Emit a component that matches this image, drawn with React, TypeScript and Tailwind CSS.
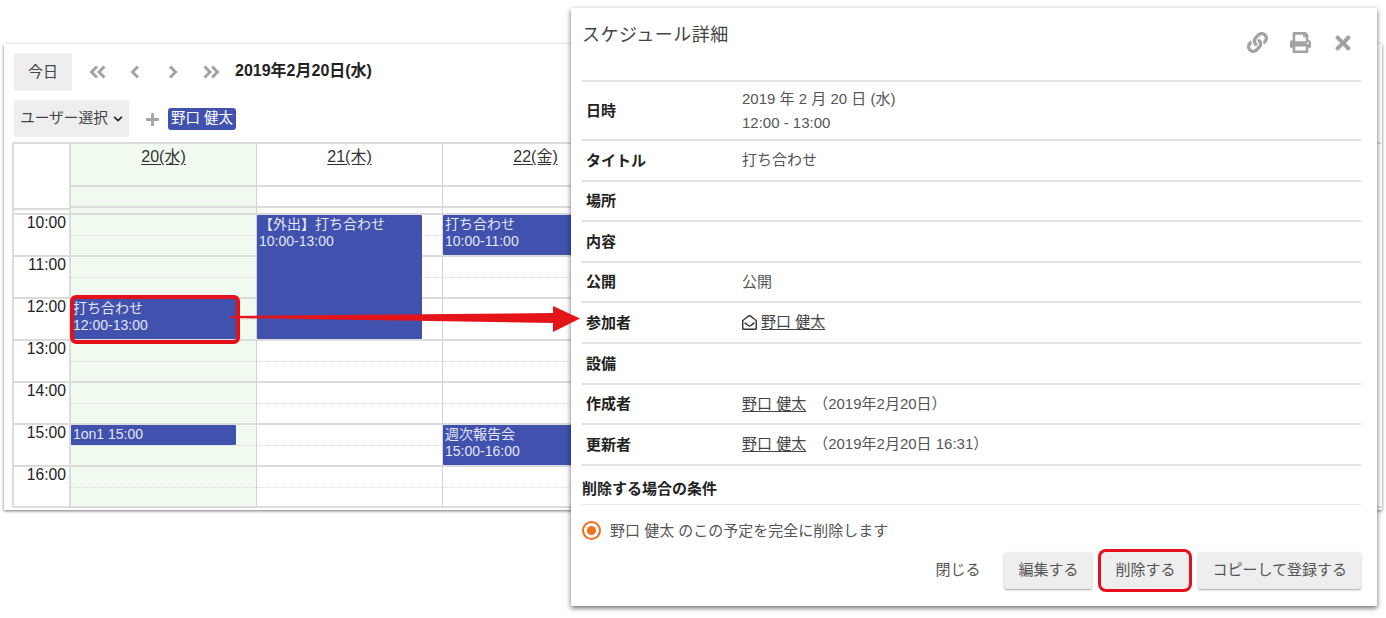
import React from "react";
import { FaLink, FaPrint, FaTimes, FaPlus, FaChevronDown, FaRegEnvelopeOpen } from "react-icons/fa";

const hours = ["10:00", "11:00", "12:00", "13:00", "14:00", "15:00", "16:00"];
const font = "font-['Liberation_Sans','Noto_Sans_CJK_JP',sans-serif]";

type Ev = { top: number; h: number; title?: string; time: string };

function Event({ top, h, title, time }: Ev) {
  return (
    <div
      className="absolute left-0 w-[165px] bg-[#4051ae] text-[#e4e7f5] text-[14px] leading-[17px] pl-[2px] pt-[1px] overflow-hidden rounded-[1px]"
      style={{ top, height: h }}
    >
      {title && <div>{title}</div>}
      <div>{time}</div>
    </div>
  );
}

function Col({ day, today, events }: { day: string; today?: boolean; events: Ev[] }) {
  return (
    <div className={`w-[186px] shrink-0 border-r border-[#d4d4d4] ${today ? "bg-[#f0faee]" : "bg-white"}`}>
      <div className="h-[43px] border-b-2 border-[#dcdcdc] text-center text-[16px] leading-[25px] text-[#333] underline underline-offset-2">
        {day}
      </div>
      <div className="h-[21px] border-b-2 border-[#dcdcdc]" />
      <div className="h-[7px] border-b-2 border-[#dcdcdc]" />
      <div className="relative">
        {hours.map((h, i) => (
          <div key={h} className={`h-[42px] ${i < 6 ? "border-b-2 border-[#dcdcdc]" : ""}`}>
            <div className="h-[21px] border-b border-dotted border-[#d8d8d8]" />
          </div>
        ))}
        {events.map((e, i) => (
          <Event key={i} {...e} />
        ))}
      </div>
    </div>
  );
}

function Row({ label, children, h = "h-[40.6px]" }: { label: string; children?: React.ReactNode; h?: string }) {
  return (
    <div className={`flex items-center ${h} border-b-2 border-[#e2e2e2]`}>
      <div className="w-[160px] pl-[4px] pt-[1px] text-[15px] font-bold text-[#222]">{label}</div>
      <div className="text-[15px] text-[#555]">{children}</div>
    </div>
  );
}

function Btn({ children, ring }: { children: React.ReactNode; ring?: boolean }) {
  return (
    <div
      className={`h-[37px] px-[14px] flex items-center bg-[#eeeeee] text-[15px] text-[#555] ${
        ring
          ? "ring-[3px] ring-[#e4101a] rounded-[5px]"
          : "rounded-[3px] shadow-[0_1px_2px_rgba(0,0,0,0.35)]"
      }`}
    >
      {children}
    </div>
  );
}

function Chevrons({ dir, double }: { dir: "l" | "r"; double?: boolean }) {
  const flip = dir === "r" ? "scale(-1 1) translate(-18 0)" : undefined;
  return (
    <svg width={double ? 18 : 11} height="14" viewBox={double ? "0 0 18 14" : "0 0 11 14"} fill="none" stroke="#a3a3a3" strokeWidth="3" strokeLinejoin="miter">
      <g transform={double ? flip : dir === "r" ? "scale(-1 1) translate(-11 0)" : undefined}>
        <path d="M8 1.5 L2.5 7 L8 12.5" />
        {double && <path d="M15.5 1.5 L10 7 L15.5 12.5" />}
      </g>
    </svg>
  );
}

export default function App() {
  return (
    <div className={`relative w-[1386px] h-[618px] overflow-hidden bg-white ${font}`}>
      <div className="pt-[44px] pl-[4px]">
        <div className="w-[1378px] h-[466px] bg-white pl-[8px] pt-[9px] shadow-[0_1px_3px_rgba(0,0,0,0.55)] overflow-hidden">
          <div className="flex items-center h-[38px] pl-[2px]">
            <div className="w-[58px] h-[38px] flex items-center justify-center bg-[#eeeeee] rounded-[2px] text-[15px] text-[#444]">今日</div>
            <div className="flex items-center ml-[17px]">
              <Chevrons dir="l" double />
              <span className="ml-[23px]"><Chevrons dir="l" /></span>
              <span className="ml-[26px]"><Chevrons dir="r" /></span>
              <span className="ml-[24px]"><Chevrons dir="r" double /></span>
            </div>
            <div className="ml-[15px] text-[16px] font-bold text-[#222] -mt-[2px]">2019年2月20日(水)</div>
          </div>
          <div className="flex items-center h-[37px] mt-[9px] pl-[2px]">
            <div className="w-[115px] h-[37px] flex items-center pl-[6px] gap-[5px] bg-[#eeeeee] rounded-[2px] text-[14.7px] text-[#444]">
              ユーザー選択<FaChevronDown className="text-[10px] text-[#222]" />
            </div>
            <FaPlus className="ml-[16px] mt-[2px] text-[15px] text-[#a3a3a3]" />
            <div className="ml-[8px] h-[22px] px-[3px] flex items-center rounded-[3px] bg-[#4051ae] text-white text-[14.5px]">野口 健太</div>
          </div>
          <div className="flex mt-[5px] border-t-2 border-l-2 border-b-2 border-[#dcdcdc] h-[366px] w-[1369px]">
            <div className="w-[57px] shrink-0 border-r-2 border-[#dcdcdc] bg-white">
              <div className="h-[64px] border-b-2 border-[#dcdcdc] box-content -mb-[2px]" />
              <div className="h-[7px] border-b-2 border-[#dcdcdc]" />
              {hours.map((h, i) => (
                <div key={h} className={`h-[42px] pr-[3px] text-right text-[15.7px] leading-[16px] text-[#222] ${i < 6 ? "border-b-2 border-[#dcdcdc]" : ""}`}>
                  {h}
                </div>
              ))}
            </div>
            <Col day="20(水)" today events={[
              { top: 84, h: 40, title: "打ち合わせ", time: "12:00-13:00" },
              { top: 210, h: 20, time: "1on1 15:00" },
            ]} />
            <Col day="21(木)" events={[
              { top: 0, h: 124, title: "【外出】打ち合わせ", time: "10:00-13:00" },
            ]} />
            <Col day="22(金)" events={[
              { top: 0, h: 40, title: "打ち合わせ", time: "10:00-11:00" },
              { top: 210, h: 40, title: "週次報告会", time: "15:00-16:00" },
            ]} />
            <Col day="23(土)" events={[]} />
            <Col day="24(日)" events={[]} />
            <Col day="25(月)" events={[]} />
            <Col day="26(火)" events={[]} />
          </div>
        </div>
      </div>

      {/* highlight on the 12:00 event */}
      <div className="absolute left-[70px] top-[295px] w-[170px] h-[49px] rounded-[6px] border-[4px] border-[#e4101a]" />

      {/* detail dialog */}
      <div className="absolute left-[571px] top-[8px] w-[806px] h-[598px] bg-white shadow-[0_2px_5px_rgba(0,0,0,0.6)] pl-[11px] pr-[16px] pt-[14px]">
        <div className="flex h-[60px] justify-between border-b-2 border-[#e2e2e2]">
          <div className="text-[18px] leading-[27px] text-[#444] tracking-[0.5px]">スケジュール詳細</div>
          <div className="flex items-center h-[21px] mt-[10px] pr-[7px] text-[#a3a3a3]">
            <FaLink className="text-[21px]" />
            <FaPrint className="text-[21px] ml-[22px]" />
            <FaTimes className="text-[22px] ml-[21px]" />
          </div>
        </div>
        <Row label="日時" h="h-[59px]">
          <div className="leading-[24px]">2019 年 2 月 20 日 (水)</div>
          <div className="leading-[24px]">12:00 - 13:00</div>
        </Row>
        <Row label="タイトル">打ち合わせ</Row>
        <Row label="場所" />
        <Row label="内容" />
        <Row label="公開">公開</Row>
        <Row label="参加者">
          <span className="flex items-center gap-[4px]">
            <FaRegEnvelopeOpen className="text-[15px] text-[#333]" />
            <span className="underline underline-offset-2 text-[#444]">野口 健太</span>
          </span>
        </Row>
        <Row label="設備" />
        <Row label="作成者">
          <span className="underline underline-offset-2 text-[#444]">野口 健太</span>
          <span className="ml-[7px]">（2019年2月20日）</span>
        </Row>
        <Row label="更新者">
          <span className="underline underline-offset-2 text-[#444]">野口 健太</span>
          <span className="ml-[7px]">（2019年2月20日 16:31）</span>
        </Row>
        <div className="h-[39px] flex items-end pb-[3px] border-b border-[#e8e8e8] text-[15px] font-bold text-[#222]">削除する場合の条件</div>
        <div className="flex items-center h-[47px] pt-[5px] text-[15px] text-[#555]">
          <div className="w-[19px] h-[19px] rounded-full border-2 border-[#f0701c] flex items-center justify-center mr-[9px]">
            <div className="w-[9px] h-[9px] rounded-full bg-[#f0701c]" />
          </div>
          野口 健太 のこの予定を完全に削除します
        </div>
        <div className="flex justify-end items-center gap-[9px]">
          <div className="text-[15px] text-[#555] mr-[15px]">閉じる</div>
          <Btn>編集する</Btn>
          <Btn ring>削除する</Btn>
          <Btn>コピーして登録する</Btn>
        </div>
      </div>

      {/* arrow */}
      <svg className="absolute left-[230px] top-[300px]" width="352" height="36" viewBox="0 0 352 36">
        <path d="M0 16 L323 13 L323 6 L350 18.5 L323 32 L323 23 L0 18 Z" fill="#e5141a" />
      </svg>
    </div>
  );
}
